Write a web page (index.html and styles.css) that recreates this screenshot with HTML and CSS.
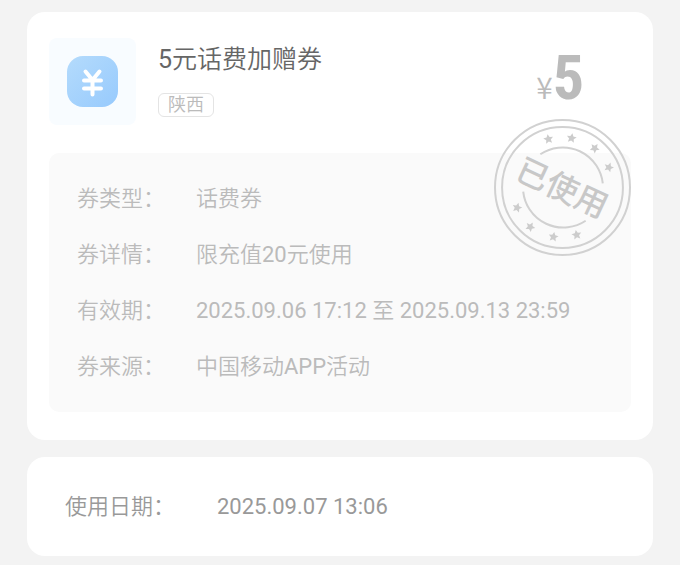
FILE: index.html
```
<!DOCTYPE html>
<html lang="zh-CN">
<head>
  <meta charset="UTF-8" />
  <meta name="viewport" content="width=device-width, initial-scale=1.0"/>
  <title>5元话费加赠券</title>
  <link rel="stylesheet" href="styles.css">
</head>
<body>
  <main class="page">
    <section class="card coupon">
      <header class="coupon-head">
        <div class="thumb">
          <svg class="thumb-icon" viewBox="0 0 51 51" aria-hidden="true">
            <defs>
              <linearGradient id="blue" x1="0" y1="0" x2="1" y2="1">
                <stop offset="0" stop-color="#b4dbfc"/>
                <stop offset="1" stop-color="#97cafd"/>
              </linearGradient>
            </defs>
            <rect width="51" height="51" rx="16" fill="url(#blue)"/>
            <path d="M18.5 15.5 L25.5 24 L32.5 15.5 M17 24.5 H34 M17 32.5 H34 M25.5 24 V38.5"
                  fill="none" stroke="#fff" stroke-width="4" stroke-linecap="round" stroke-linejoin="round"/>
          </svg>
        </div>
        <div class="coupon-info">
          <h1>5元话费加赠券</h1>
          <span class="tag">陕西</span>
        </div>
        <div class="price"><span class="unit">¥</span><span class="num">5</span></div>
      </header>

      <div class="detail">
        <dl>
          <dt>券类型：</dt>
          <dd>话费券</dd>
          <dt>券详情：</dt>
          <dd>限充值20元使用</dd>
          <dt>有效期：</dt>
          <dd>2025.09.06 17:12 至 2025.09.13 23:59</dd>
          <dt>券来源：</dt>
          <dd>中国移动APP活动</dd>
        </dl>

        <!-- used stamp -->
        <svg class="stamp" viewBox="0 0 136 136">
          <defs>
            <path id="star" d="M0 -5 L1.5 -1.8 L4.9 -1.5 L2.3 0.8 L3 4.2 L0 2.4 L-3 4.2 L-2.3 0.8 L-4.9 -1.5 L-1.5 -1.8 Z"/>
          </defs>
          <g fill="none" stroke="#d1d1d1" stroke-width="2">
            <circle cx="68" cy="68" r="67"/>
            <circle cx="68" cy="68" r="60"/>
            <path d="M46 35 A40 40 0 0 1 108 64"/>
            <path d="M29 72 A40 40 0 0 0 91 101"/>
          </g>
          <g fill="#cccccc">
            <use href="#star" transform="translate(54 20) rotate(-10)"/>
            <use href="#star" transform="translate(77 19) rotate(10)"/>
            <use href="#star" transform="translate(100 29) rotate(35)"/>
            <use href="#star" transform="translate(114 48) rotate(20)"/>
            <use href="#star" transform="translate(23 88) rotate(15)"/>
            <use href="#star" transform="translate(36 107) rotate(30)"/>
            <use href="#star" transform="translate(59 117) rotate(10)"/>
            <use href="#star" transform="translate(82 115) rotate(-10)"/>
          </g>
          <text x="68" y="80" text-anchor="middle" transform="rotate(25 68 68)">已使用</text>
        </svg>
      </div>
    </section>

    <section class="card usage">
      <dl>
        <dt>使用日期：</dt>
        <dd>2025.09.07 13:06</dd>
      </dl>
    </section>
  </main>
</body>
</html>
```
FILE: styles.css
```
:root {
  --bg: #f3f3f3;
  --panel: #fafafa;
  --title: #666666;
  --text: #999999;
  --muted: #bbbbbb;
}

* {
  margin: 0;
  padding: 0;
  box-sizing: border-box;
}

body {
  background-color: var(--bg);
  color: var(--text);
  font-family: Roboto, "Noto Sans CJK SC DemiLight", "Noto Sans CJK SC", sans-serif;
  font-size: 22px;
}

.page {
  display: flex;
  flex-direction: column;
  gap: 17px;
  padding: 12px 27px 9px;
}

.card {
  background-color: #fff;
  border-radius: 18px;
}

.coupon {
  padding: 26px 22px 28px;
}

.coupon-head {
  display: flex;
  gap: 22px;
  margin-bottom: 28px;
}

.thumb {
  width: 87px;
  height: 87px;
  border-radius: 8px;
  background-color: #f8fcff;
  display: flex;
  align-items: center;
  justify-content: center;
}

.thumb-icon {
  width: 51px;
  height: 51px;
}

.coupon-info {
  flex: 1;
  display: flex;
  flex-direction: column;
  align-items: flex-start;
  gap: 12px;
}

h1 {
  color: var(--title);
  font-size: 25px;
  font-weight: 400;
  line-height: 43px;
}

.tag {
  padding: 0 9px;
  border: 1px solid #e4e4e4;
  border-radius: 6px;
  color: var(--muted);
  font-size: 18px;
  line-height: 22px;
}

.price {
  display: flex;
  align-items: baseline;
  margin-right: 47px;
  color: var(--muted);
}

.unit {
  font-family: "Noto Sans CJK SC DemiLight", "Noto Sans CJK SC", sans-serif;
  font-size: 30px;
  line-height: 1;
}

.num {
  font-family: "Roboto Condensed", Roboto, sans-serif;
  font-size: 62px;
  font-weight: 700;
  line-height: 80px;
}

.detail {
  position: relative;
  padding: 18px 28px 17px;
  border-radius: 10px;
  background-color: var(--panel);
  color: var(--muted);
}

dl {
  display: grid;
  grid-template-columns: 119px 1fr;
  line-height: 56px;
}

/* sits over the top right corner of the detail panel */
.stamp {
  position: absolute;
  top: -34px;
  right: 0;
  width: 137px;
  height: 137px;
}

.stamp text {
  fill: #c8c8c8;
  font-family: "Noto Sans CJK SC", sans-serif;
  font-size: 32px;
  font-weight: 500;
}

.usage {
  padding: 22px 38px 21px;
}

.usage dl {
  grid-template-columns: 152px 1fr;
}
```
